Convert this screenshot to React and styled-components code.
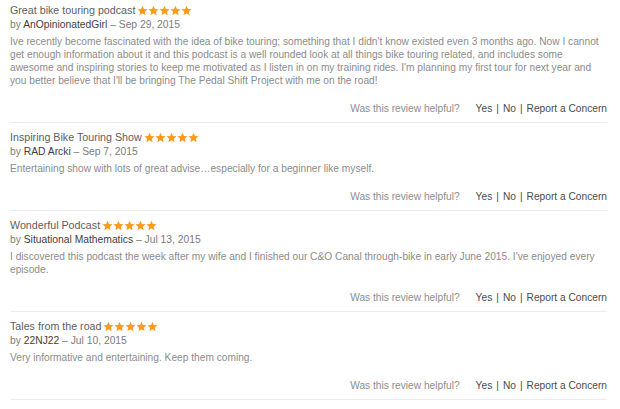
import React from "react";
import styled, { createGlobalStyle } from "styled-components";

const GlobalStyle = createGlobalStyle`
  html, body {
    margin: 0;
    padding: 0;
    background: #ffffff;
  }
  body {
    font-family: "Liberation Sans", Arial, Helvetica, sans-serif;
    -webkit-font-smoothing: antialiased;
  }
`;

const List = styled.div`
  padding: 0 13px 0 10px;
  margin-top: -4px;
`;

const Review = styled.div`
  padding: 6px 0 7px;
  border-bottom: 1px solid #ececec;
`;

const TitleRow = styled.div`
  display: flex;
  align-items: center;
  gap: 2px;
  height: 16px;
`;

const Title = styled.span`
  font-size: 10.7px;
  color: #5e5e5e;
`;

const Stars = styled.span`
  display: flex;
  align-items: center;
`;

const Byline = styled.div`
  font-size: 10.3px;
  line-height: 14px;
  color: #7c7c7c;
`;

const Author = styled.span`
  color: #3e3e3e;
`;

const Body = styled.p`
  margin: 3px 0 0;
  font-size: 10.2px;
  line-height: 13px;
  color: #8c8c8c;
`;

const Helpful = styled.div`
  display: flex;
  justify-content: flex-end;
  align-items: center;
  margin-top: 14px;
  height: 14px;
  font-size: 10.2px;
  color: #8e8e8e;
`;

const Question = styled.span`
  margin-right: 16px;
`;

const Action = styled.span`
  color: #4c4c4c;
`;

const Pipe = styled.span`
  color: #4c4c4c;
  margin: 0 4px;
`;

const Star = () => (
  <svg width="11" height="11" viewBox="0 0 24 24">
    <path
      d="M12 1.5l3.09 7.2 7.81.68-5.92 5.14 1.77 7.63L12 18.1l-6.75 4.05 1.77-7.63L1.1 9.38l7.81-.68z"
      fill="#fc9a1c"
    />
  </svg>
);

const reviews = [
  {
    title: "Great bike touring podcast",
    author: "AnOpinionatedGirl",
    date: "Sep 29, 2015",
    text:
      "Ive recently become fascinated with the idea of bike touring; something that I didn't know existed even 3 months ago. Now I cannot get enough information about it and this podcast is a well rounded look at all things bike touring related, and includes some awesome and inspiring stories to keep me motivated as I listen in on my training rides. I'm planning my first tour for next year and you better believe that I'll be bringing The Pedal Shift Project with me on the road!",
  },
  {
    title: "Inspiring Bike Touring Show",
    author: "RAD Arcki",
    date: "Sep 7, 2015",
    text: "Entertaining show with lots of great advise\u2026especially for a beginner like myself.",
  },
  {
    title: "Wonderful Podcast",
    author: "Situational Mathematics",
    date: "Jul 13, 2015",
    text:
      "I discovered this podcast the week after my wife and I finished our C&O Canal through-bike in early June 2015. I've enjoyed every episode.",
  },
  {
    title: "Tales from the road",
    author: "22NJ22",
    date: "Jul 10, 2015",
    text: "Very informative and entertaining. Keep them coming.",
  },
  {
    title: "Great",
    author: "Pedaler",
    date: "Jul 2, 2015",
    text: "Great podcast.",
  },
];

const App = () => {
  return (
    <>
      <GlobalStyle />
      <List>
        {reviews.map((r) => (
          <Review key={r.title}>
            <TitleRow>
              <Title>{r.title}</Title>
              <Stars>
                {[0, 1, 2, 3, 4].map((i) => (
                  <Star key={i} />
                ))}
              </Stars>
            </TitleRow>
            <Byline>
              by <Author>{r.author}</Author> – {r.date}
            </Byline>
            <Body>{r.text}</Body>
            <Helpful>
              <Question>Was this review helpful?</Question>
              <Action>Yes</Action>
              <Pipe>|</Pipe>
              <Action>No</Action>
              <Pipe>|</Pipe>
              <Action>Report a Concern</Action>
            </Helpful>
          </Review>
        ))}
      </List>
    </>
  );
};

export default App;
